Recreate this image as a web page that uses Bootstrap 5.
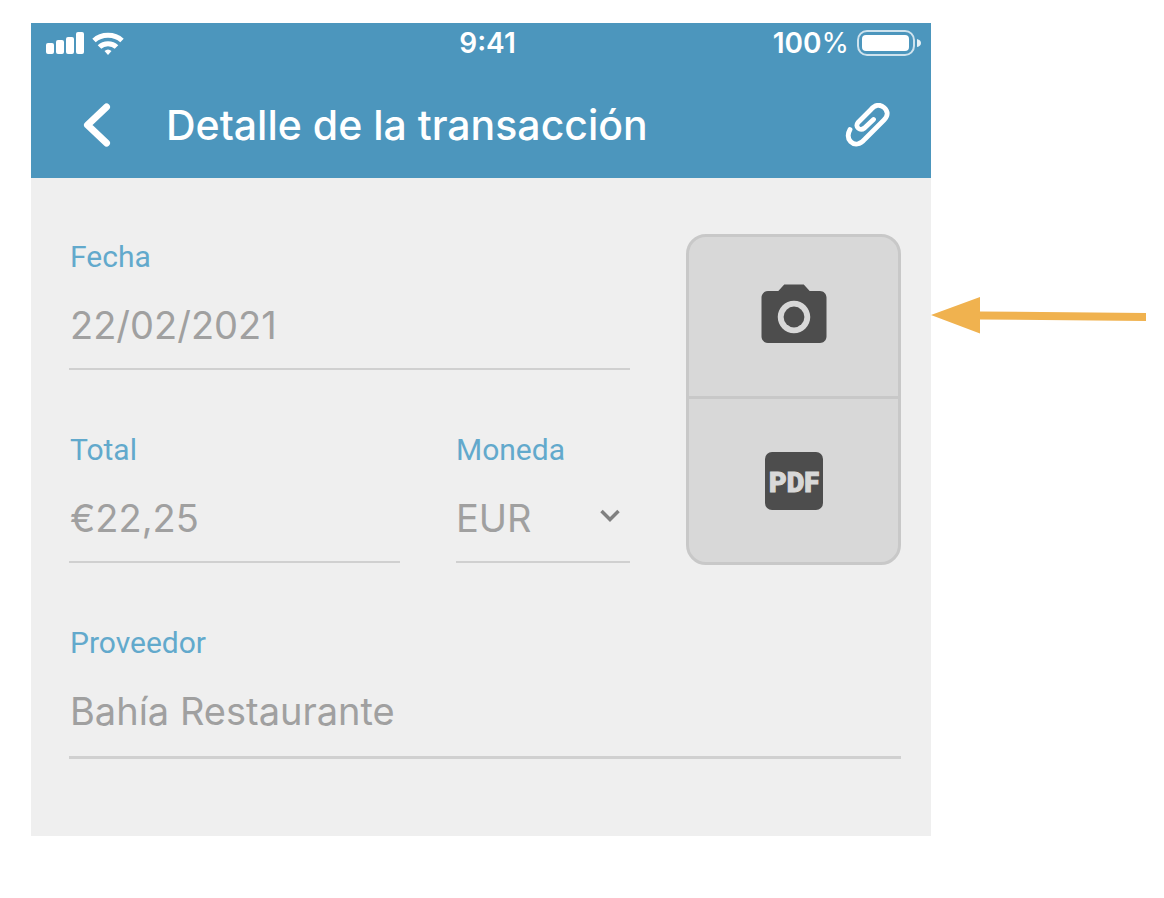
<!DOCTYPE html>
<html lang="es">
<head>
<meta charset="utf-8">
<meta name="viewport" content="width=device-width, initial-scale=1">
<title>Detalle de la transacción</title>
<link rel="stylesheet" href="https://cdn.jsdelivr.net/npm/bootstrap@5.3.0/dist/css/bootstrap.min.css">
<style>
  body { font-family: Inter, Roboto, sans-serif; background: #fff; }
  .page { padding: 23px 18px 0 31px; }
  .screen { background: #efefef; min-width: 0; }
  .app-head { background: #4c96bd; color: #fff; }
  .status { height: 40px; padding: 0 10px 0 15px; line-height: 40px; font-size: 28px; font-weight: 600; }
  .status .side { flex: 1 1 0; }
  .title-row { height: 115px; padding: 14px 38px 5px 48px; }
  .title-row h1 { font-size: 41px; line-height: 50px; font-weight: 500; padding-left: 53px; }
  .icon-btn { color: #fff; line-height: 0; }
  .content-area { padding: 56px 30px 77px 38px; }
  .gap-fields { gap: 56px; }
  .stack { gap: 62px; padding-top: 5px; min-width: 0; }
  .field-label { display: block; height: 36px; padding-left: 1px; line-height: 36px; font-family: Roboto, Inter, sans-serif; font-size: 30px; color: #62a9cc; }
  .line-input { display: block; width: 100%; height: 95px; padding: 24px 0 17px 1px; border: 0; border-bottom: 2px solid #d0d0d0; border-radius: 0; background: transparent; color: #a0a0a0; font-size: 38px; line-height: 52px; appearance: none; outline-offset: 2px; }
  .currency { width: 174px; flex: none; }
  .currency .field-label, .currency .line-input { padding-left: 0; }
  .chevron { right: 10px; bottom: 41px; pointer-events: none; }
  .supplier { margin-top: 60px; }
  .supplier .line-input { height: 98px; padding-bottom: 19px; border-bottom-width: 3px; }
  .attach { width: 215px; height: 331px; flex: none; border: 3px solid #c8c8c8; border-radius: 20px; background: #d8d8d8; overflow: hidden; }
  .attach button { flex: 1 1 0; border: 0; background: transparent; padding: 0; }
  .attach button:first-child { flex: 0 0 162px; border-bottom: 3px solid #c8c8c8; }
  .pointer { flex: none; margin-top: 274px; }
</style>
</head>
<body>
<div class="page d-flex align-items-start">
  <main class="screen flex-grow-1">
    <header class="app-head">
      <div class="status d-flex align-items-center">
        <div class="side d-flex align-items-center gap-2">
          <svg width="38" height="24" viewBox="0 0 38 24" fill="#fff" aria-hidden="true">
            <rect x="0" y="12" width="8" height="11" rx="2"/><rect x="10" y="9" width="8" height="14" rx="2"/><rect x="20" y="6" width="8" height="17" rx="2"/><rect x="30" y="1" width="8" height="22" rx="2"/>
          </svg>
          <svg width="32" height="24" viewBox="0 0 32 24" fill="none" stroke="#fff" stroke-width="5" aria-hidden="true">
            <path d="M2 9.500C9.500 2.500 22.500 2.500 30 9.500"/><path d="M7.500 16C12 11.500 20 11.500 24.500 16"/><path d="M16 24L12.500 20Q16 17 19.500 20Z" fill="#fff" stroke="none"/>
          </svg>
        </div>
        <div class="text-center ps-2">9:41</div>
        <div class="side d-flex align-items-center justify-content-end gap-2">
          <span>100<span class="fw-normal">%</span></span>
          <svg width="64" height="26" viewBox="0 0 64 26" aria-hidden="true">
            <rect x="1" y="1" width="56" height="24" rx="9" fill="none" stroke="#cfe3ee" stroke-width="2"/><rect x="5" y="5" width="47" height="16" rx="4" fill="#fff"/><path d="M60 9q4 1 4 4t-4 4z" fill="#e6f1f6"/>
          </svg>
        </div>
      </div>
      <div class="title-row d-flex align-items-center">
        <button type="button" class="btn p-0 border-0 icon-btn" aria-label="Volver">
          <svg width="34" height="44" viewBox="0 0 34 44" fill="none" stroke="#fff" stroke-width="7" stroke-linecap="round" stroke-linejoin="round"><path d="M27.500 4L8.500 22l19 18" /></svg>
        </button>
        <h1 class="mb-0 flex-grow-1 text-nowrap">Detalle de la transacción</h1>
        <button type="button" class="btn p-0 border-0 icon-btn" aria-label="Adjuntar">
          <svg width="48" height="44" viewBox="-1 0 48 44" fill="none" stroke="#fff" stroke-width="4.800" stroke-linecap="round" stroke-linejoin="round"><path d="M27.500 16.500L18.500 25C14 28.500 8.500 24 12 19.500L25 6.500C29 1.500 34 1 38 4.500C42.500 8.500 42 13 38 17L19 36C14 42 8.500 42.500 4.500 38.500C1.500 35 1.500 31 4 26.500"/></svg>
        </button>
      </div>
    </header>

    <form class="content-area">
      <div class="d-flex gap-fields">
        <div class="stack d-flex flex-column flex-grow-1">
          <div>
            <label class="field-label" for="fecha">Fecha</label>
            <input class="line-input" id="fecha" type="text" value="22/02/2021">
          </div>
          <div class="d-flex gap-fields">
            <div class="flex-grow-1">
              <label class="field-label" for="total">Total</label>
              <input class="line-input" id="total" type="text" value="€22,25">
            </div>
            <div class="currency position-relative">
              <label class="field-label" for="moneda">Moneda</label>
              <select class="line-input" id="moneda"><option>EUR</option></select>
              <svg class="chevron position-absolute" width="20" height="13" viewBox="0 0 20 13" fill="none" stroke="#808080" stroke-width="3.500" aria-hidden="true"><path d="M1.500 2L10 10.500 18.500 2"/></svg>
            </div>
          </div>
        </div>
        <div class="attach d-flex flex-column">
          <button type="button" aria-label="Cámara">
            <svg width="78" height="78" viewBox="0 0 24 24" fill="#4d4d4d"><circle cx="12" cy="12" r="3.200"/><path d="M9 2L7.170 4H4c-1.100 0-2 .9-2 2v12c0 1.100.9 2 2 2h16c1.100 0 2-.9 2-2V6c0-1.100-.9-2-2-2h-3.170L15 2H9zm3 15c-2.760 0-5-2.240-5-5s2.240-5 5-5 5 2.240 5 5-2.240 5-5 5z"/></svg>
          </button>
          <button type="button" aria-label="PDF">
            <svg width="58" height="58" viewBox="0 0 58 58"><rect width="58" height="58" rx="7" fill="#4d4d4d"/><text x="29" y="40" text-anchor="middle" font-family="Roboto, sans-serif" font-weight="900" font-size="27" fill="#d8d8d8" stroke="#d8d8d8">PDF</text></svg>
          </button>
        </div>
      </div>
      <div class="supplier">
        <label class="field-label" for="proveedor">Proveedor</label>
        <input class="line-input" id="proveedor" type="text" value="Bahía Restaurante">
      </div>
    </form>
  </main>
  <svg class="pointer" width="215" height="37" viewBox="0 0 215 37" fill="#f0b24f" aria-hidden="true"><path d="M0 18L49 0V14.500L215 16V24L49 22.500V36.500Z"/></svg>
</div>
<script src="https://cdn.jsdelivr.net/npm/bootstrap@5.3.0/dist/js/bootstrap.bundle.min.js"></script>
</body>
</html>
